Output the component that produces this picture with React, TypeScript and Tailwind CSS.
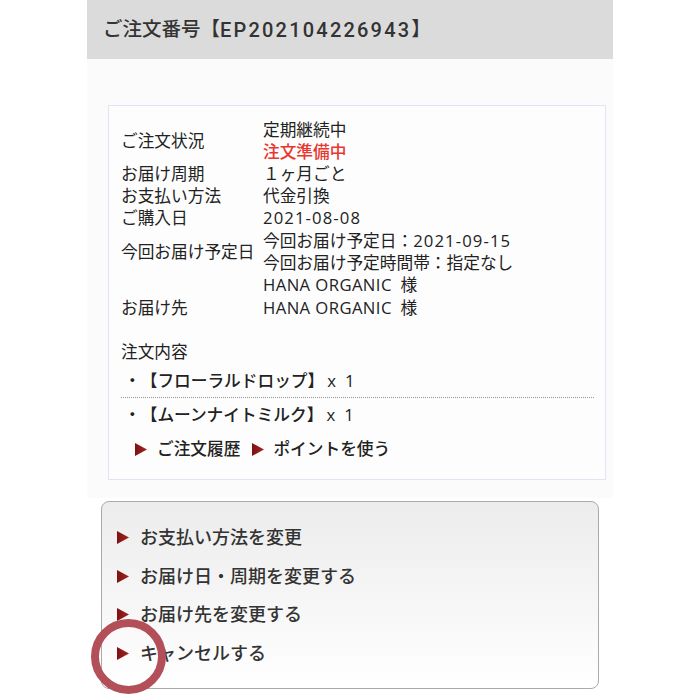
import React from "react";

const Tri = ({ size = 12 }: { size?: number }) => (
  <svg width={size} height={Math.round(size * 1.1)} viewBox="0 0 12 13" className="shrink-0">
    <defs>
      <linearGradient id="tg" x1="0" y1="0" x2="1" y2="0">
        <stop offset="0" stopColor="#7d1212" />
        <stop offset="1" stopColor="#a42424" />
      </linearGradient>
    </defs>
    <polygon points="0,0 12,6.5 0,13" fill="url(#tg)" />
  </svg>
);

const Row = ({ label, children, className = "" }: { label: string; children: React.ReactNode; className?: string }) => (
  <div className={"flex items-center " + className}>
    <div className="w-[142px] shrink-0">{label}</div>
    <div className="flex flex-col">{children}</div>
  </div>
);

const Item = ({ name }: { name: string }) => (
  <div className="leading-[24px] font-medium flex pl-[3px]">
    <span>・</span>
    <span>【{name}】</span>
    <span className="ml-[3px]">x</span>
    <span className="ml-[9px]">1</span>
  </div>
);

export default function App() {
  return (
    <div
      className="relative w-[700px] h-[700px] bg-white flex justify-center overflow-hidden text-[#333]"
      style={{ fontFamily: '"Open Sans","Noto Sans CJK JP",sans-serif' }}
    >
      <div className="w-[526px] flex flex-col">
        <div
          className="h-[59px] shrink-0 bg-[#dcdbdc] pl-[16px] flex items-center text-[19.5px] font-medium text-[#333]"
          style={{ fontFamily: 'Roboto,"Noto Sans CJK JP",sans-serif' }}
        >
          ご注文番号【<span className="tracking-[2.2px] text-[20px]">EP202104226943</span>】
        </div>
        <div className="bg-[#fbfbfb] pt-[46px] pl-[21px] pr-[7px] pb-[18px]">
          <div className="border border-[#e3e3f3] bg-[#fdfdfd] pt-[13px] pl-[12px] pr-[11px] pb-[18px] text-[16.7px] leading-[22px] text-[#222]">
            <Row label="ご注文状況">
              <span>定期継続中</span>
              <span className="text-[#e8372f] font-medium">注文準備中</span>
            </Row>
            <Row label="お届け周期">
              <span>１ヶ月ごと</span>
            </Row>
            <Row label="お支払い方法">
              <span>代金引換</span>
            </Row>
            <Row label="ご購入日">
              <span className="tracking-[1.1px]">2021-08-08</span>
            </Row>
            <Row label="今回お届け予定日" className="mt-[1px]">
              <span>
                今回お届け予定日：<span className="tracking-[1.1px]">2021-09-15</span>
              </span>
              <span>今回お届け予定時間帯：指定なし</span>
            </Row>
            <Row label="">
              <span>
                <span className="tracking-[0.4px]">HANA ORGANIC</span>&nbsp; 様
              </span>
            </Row>
            <Row label="お届け先" className="mt-[1px]">
              <span>
                <span className="tracking-[0.4px]">HANA ORGANIC</span>&nbsp; 様
              </span>
            </Row>
            <div className="mt-[22px]">注文内容</div>
            <div className="mt-[6px]">
              <Item name="フローラルドロップ" />
            </div>
            <div className="mt-[4px] border-t border-dotted border-[#999]" />
            <div className="mt-[5px]">
              <Item name="ムーンナイトミルク" />
            </div>
            <div className="mt-[10px] leading-[24px] font-medium flex items-center pl-[14px]">
              <Tri size={12} />
              <span className="ml-[10px]">ご注文履歴</span>
              <span className="ml-[12px]">
                <Tri size={12} />
              </span>
              <span className="ml-[9px]">ポイントを使う</span>
            </div>
          </div>
        </div>
        <div className="mx-[14px] mt-[3px] h-[188px] rounded-[8px] border border-[#aaaaaa] bg-gradient-to-b from-[#ececec] to-white pt-[16px] pl-[15px] text-[18px] font-medium leading-[38.67px] flex flex-col">
          {["お支払い方法を変更", "お届け日・周期を変更する", "お届け先を変更する", "キャンセルする"].map((t) => (
            <div key={t} className="flex items-center">
              <Tri size={12} />
              <span className="ml-[11px]">{t}</span>
            </div>
          ))}
        </div>
      </div>
      <div className="absolute left-[91px] top-[619px] w-[75px] h-[75px] rounded-full border-[8px] border-[#b24f59]" />
    </div>
  );
}
